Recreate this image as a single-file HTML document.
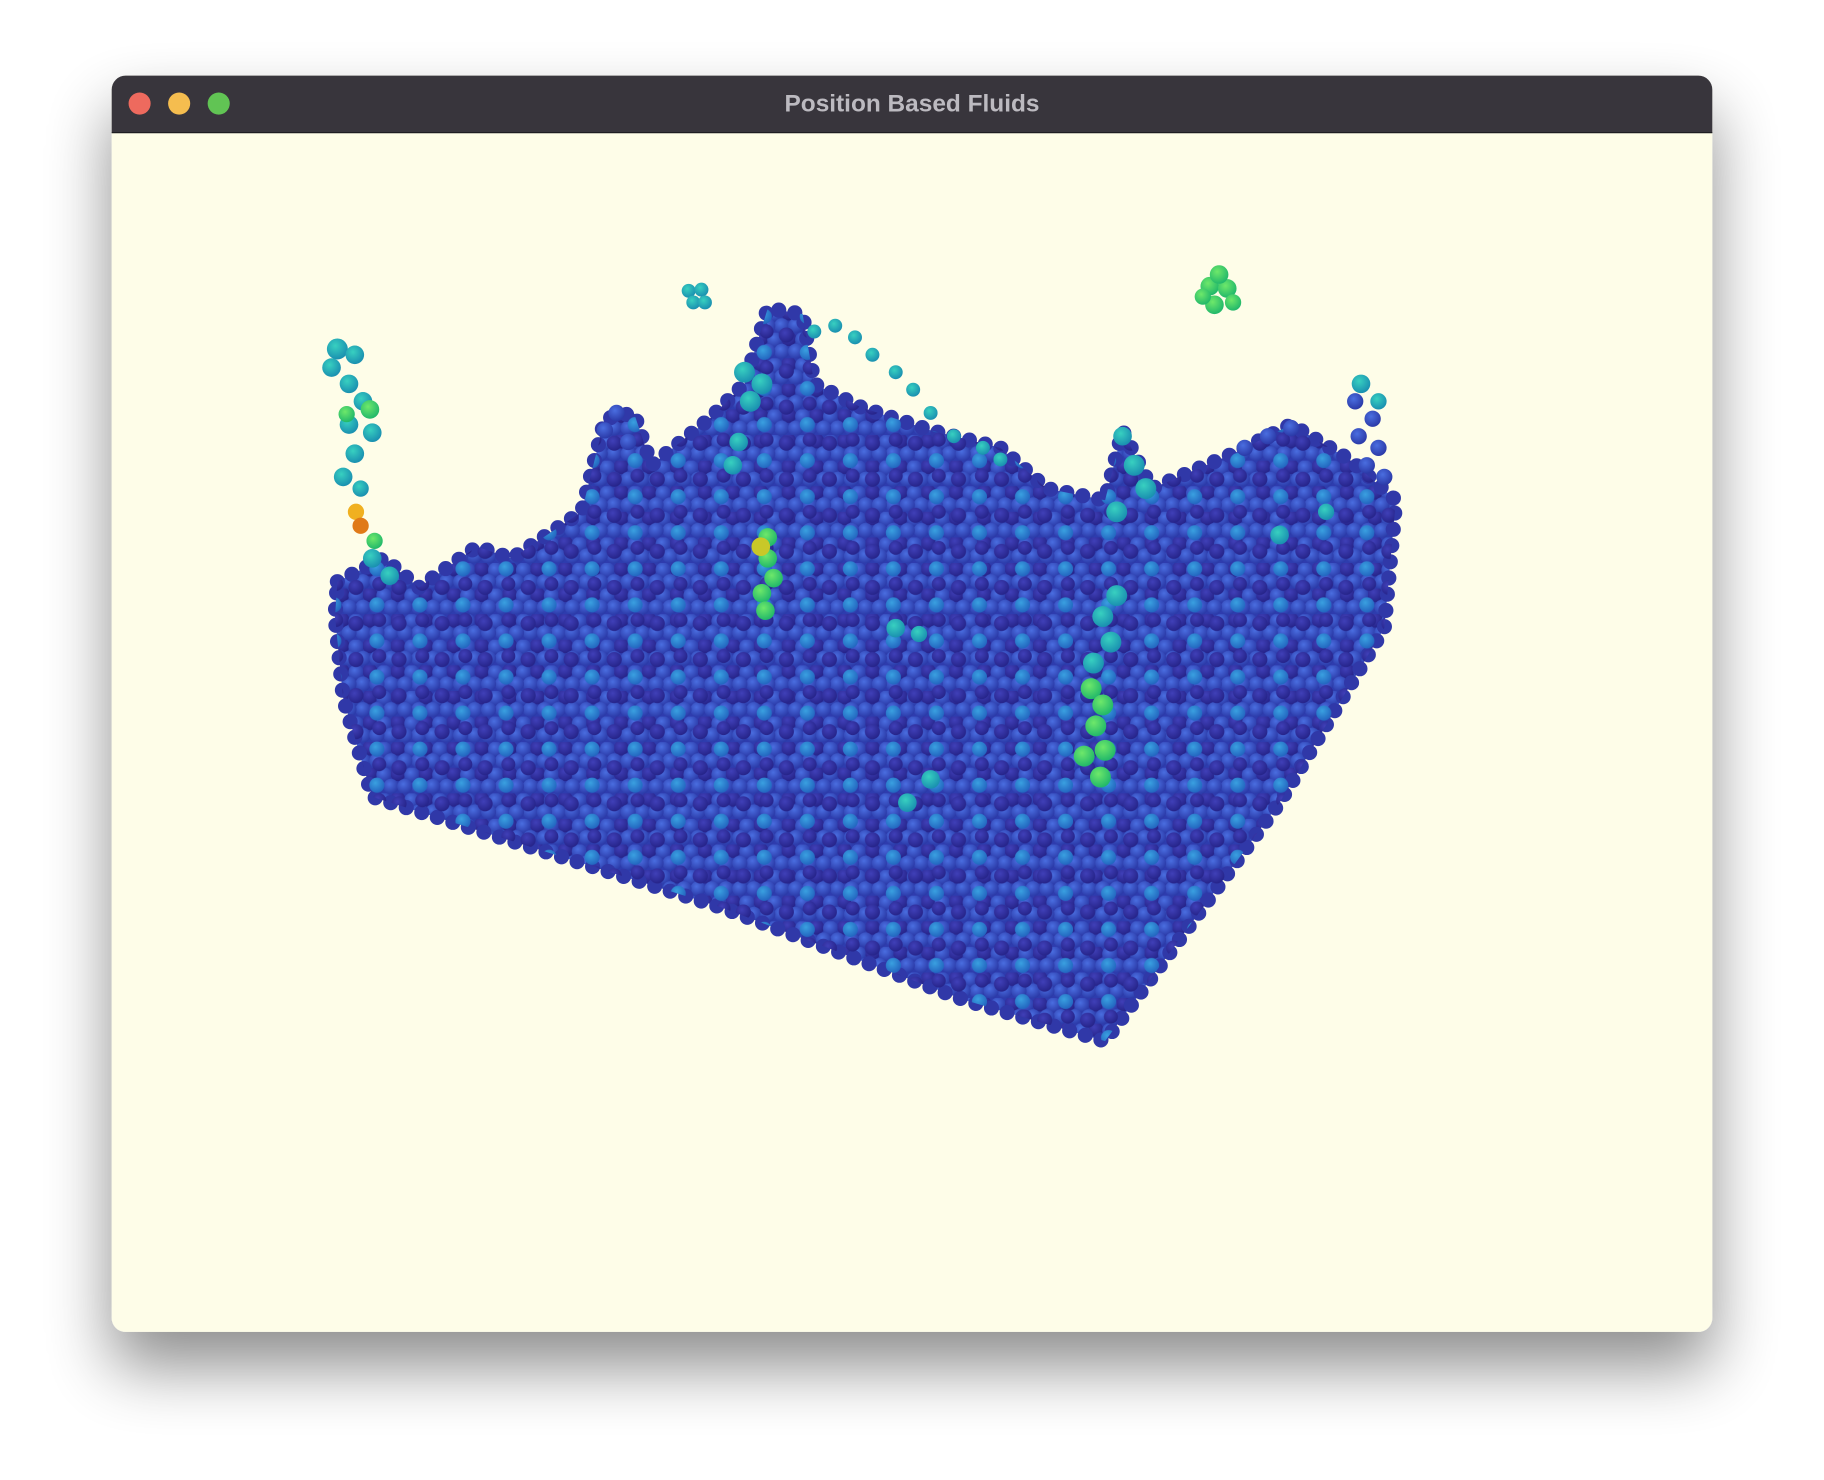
<!DOCTYPE html>
<html><head><meta charset="utf-8"><style>
html,body{margin:0;padding:0;background:#fff;width:1824px;height:1480px;overflow:hidden}
svg{display:block}
</style></head><body>
<svg width="1824" height="1480" viewBox="0 0 1568 1272.3" xmlns="http://www.w3.org/2000/svg">
<defs>
<filter id="sh" x="-20%" y="-20%" width="140%" height="150%">
<feGaussianBlur in="SourceAlpha" stdDeviation="28"/><feOffset dy="30"/>
<feComponentTransfer><feFuncA type="linear" slope="0.45"/></feComponentTransfer>
<feMerge><feMergeNode/><feMergeNode in="SourceGraphic"/></feMerge></filter>
<radialGradient id="gb" cx="40%" cy="35%" r="65%"><stop offset="0" stop-color="#4a6ee0"/><stop offset="1" stop-color="#2b3aa8"/></radialGradient>
<radialGradient id="gd" cx="40%" cy="35%" r="65%"><stop offset="0" stop-color="#4040b8"/><stop offset="1" stop-color="#26248a"/></radialGradient>
<radialGradient id="gc" cx="40%" cy="35%" r="65%"><stop offset="0" stop-color="#3aa0e0"/><stop offset="1" stop-color="#2366c0"/></radialGradient>
<radialGradient id="gg" cx="40%" cy="35%" r="65%"><stop offset="0" stop-color="#6ee86a"/><stop offset="1" stop-color="#22b86a"/></radialGradient>
<radialGradient id="gt" cx="40%" cy="35%" r="65%"><stop offset="0" stop-color="#38d0c0"/><stop offset="1" stop-color="#1a90b0"/></radialGradient>
<pattern id="p" width="24" height="22" patternUnits="userSpaceOnUse">
<rect width="24" height="22" fill="#2e3cae"/>
<circle cx="6" cy="5" r="6.5" fill="url(#gd)"/>
<circle cx="18" cy="6" r="6.5" fill="url(#gb)"/>
<circle cx="0" cy="16" r="6.5" fill="url(#gb)"/>
<circle cx="24" cy="16" r="6.5" fill="url(#gb)"/>
<circle cx="12" cy="16" r="6.5" fill="url(#gb)"/>
</pattern>
<pattern id="p2" width="37" height="31" patternUnits="userSpaceOnUse">
<circle cx="10" cy="9" r="6.5" fill="url(#gd)"/>
<circle cx="28" cy="24" r="6.5" fill="url(#gc)"/>
<circle cx="30" cy="6" r="6" fill="url(#gd)"/>
</pattern>
</defs>
<g filter="url(#sh)">
<rect x="96" y="65" width="1376" height="1080" rx="12" fill="#fefde8"/>
</g>
<path d="M108 65 H1460 a12 12 0 0 1 12 12 V114 H96 V77 a12 12 0 0 1 12 -12z" fill="#38353c"/>
<line x1="96" y1="114" x2="1472" y2="114" stroke="#1e1e22" stroke-width="1"/>
<circle cx="120" cy="89" r="9.5" fill="#ee6a5e"/>
<circle cx="154" cy="89" r="9.5" fill="#f5bd4f"/>
<circle cx="188" cy="89" r="9.5" fill="#61c454"/>
<text x="784" y="96" text-anchor="middle" font-family="Liberation Sans, sans-serif" font-weight="bold" font-size="21" fill="#bcbac0">Position Based Fluids</text>
<g>
<path id="fl" d="M290 500 L330 480 L360 505 L410 470 L440 480 L500 440 L520 360 L545 355 L560 400 L610 360 L640 330 L660 265 L690 270 L700 330 L740 350 L800 370 L860 385 L900 420 L950 430 L965 370 L990 420 L1060 390 L1110 365 L1160 395 L1200 430 L1190 540 L1100 690 L950 895 L830 860 L620 780 L320 685 L295 600 L288 530 Z" fill="url(#p)" stroke="#3038a8" stroke-width="13" stroke-linecap="round" stroke-dasharray="0 14"/>
<path d="M290 500 L330 480 L360 505 L410 470 L440 480 L500 440 L520 360 L545 355 L560 400 L610 360 L640 330 L660 265 L690 270 L700 330 L740 350 L800 370 L860 385 L900 420 L950 430 L965 370 L990 420 L1060 390 L1110 365 L1160 395 L1200 430 L1190 540 L1100 690 L950 895 L830 860 L620 780 L320 685 L295 600 L288 530 Z" fill="url(#p2)"/>
</g>
<g fill="url(#gt)">
<circle cx="290" cy="300" r="9"/><circle cx="305" cy="305" r="8"/><circle cx="285" cy="316" r="8"/><circle cx="300" cy="330" r="8"/>
<circle cx="312" cy="345" r="8"/><circle cx="300" cy="365" r="8"/><circle cx="320" cy="372" r="8"/><circle cx="305" cy="390" r="8"/>
<circle cx="295" cy="410" r="8"/><circle cx="310" cy="420" r="7"/><circle cx="320" cy="480" r="8"/><circle cx="335" cy="495" r="8"/>
</g>
<g fill="url(#gg)"><circle cx="318" cy="352" r="8"/><circle cx="298" cy="356" r="7"/><circle cx="322" cy="465" r="7"/></g>
<circle cx="306" cy="440" r="7" fill="#f0b020"/><circle cx="310" cy="452" r="7" fill="#e07a18"/>
<g fill="url(#gb)">
<circle cx="1165" cy="345" r="7"/><circle cx="1180" cy="360" r="7"/><circle cx="1168" cy="375" r="7"/><circle cx="1185" cy="385" r="7"/><circle cx="1175" cy="400" r="7"/><circle cx="1190" cy="410" r="7"/>
<circle cx="1070" cy="385" r="7"/><circle cx="1090" cy="375" r="7"/><circle cx="1110" cy="368" r="7"/><circle cx="530" cy="355" r="7"/><circle cx="540" cy="380" r="7"/><circle cx="520" cy="370" r="7"/>
</g>
<g fill="url(#gt)">
<circle cx="700" cy="285" r="6"/><circle cx="718" cy="280" r="6"/><circle cx="735" cy="290" r="6"/><circle cx="750" cy="305" r="6"/><circle cx="770" cy="320" r="6"/><circle cx="785" cy="335" r="6"/><circle cx="800" cy="355" r="6"/><circle cx="820" cy="375" r="6"/><circle cx="845" cy="385" r="6"/><circle cx="860" cy="395" r="6"/>
<circle cx="640" cy="320" r="9"/><circle cx="655" cy="330" r="9"/><circle cx="645" cy="345" r="9"/>
<circle cx="965" cy="375" r="8"/><circle cx="975" cy="400" r="9"/><circle cx="985" cy="420" r="9"/><circle cx="960" cy="440" r="9"/>
<circle cx="1170" cy="330" r="8"/><circle cx="1185" cy="345" r="7"/><circle cx="1100" cy="460" r="8"/><circle cx="1140" cy="440" r="7"/>
<circle cx="780" cy="690" r="8"/><circle cx="800" cy="670" r="8"/><circle cx="770" cy="540" r="8"/><circle cx="790" cy="545" r="7"/>
<circle cx="630" cy="400" r="8"/><circle cx="635" cy="380" r="8"/>
</g>
<g fill="url(#gg)"><circle cx="660" cy="462" r="8"/><circle cx="660" cy="480" r="8"/><circle cx="665" cy="497" r="8"/><circle cx="655" cy="510" r="8"/><circle cx="658" cy="525" r="8"/></g>
<circle cx="654" cy="470" r="8" fill="#c8c828"/>
<g fill="url(#gt)"><circle cx="960" cy="512" r="9"/><circle cx="948" cy="530" r="9"/><circle cx="955" cy="552" r="9"/><circle cx="940" cy="570" r="9"/></g>
<g fill="url(#gg)"><circle cx="938" cy="592" r="9"/><circle cx="948" cy="606" r="9"/><circle cx="942" cy="624" r="9"/><circle cx="950" cy="645" r="9"/><circle cx="932" cy="650" r="9"/><circle cx="946" cy="668" r="9"/></g>
<g fill="url(#gg)">
<circle cx="1040" cy="246" r="8"/><circle cx="1055" cy="248" r="8"/><circle cx="1048" cy="236" r="8"/><circle cx="1044" cy="262" r="8"/><circle cx="1060" cy="260" r="7"/><circle cx="1034" cy="255" r="7"/>
</g>
<g fill="url(#gt)"><circle cx="592" cy="250" r="6"/><circle cx="603" cy="249" r="6"/><circle cx="596" cy="260" r="6"/><circle cx="606" cy="260" r="6"/></g>
</svg>
</body></html>
